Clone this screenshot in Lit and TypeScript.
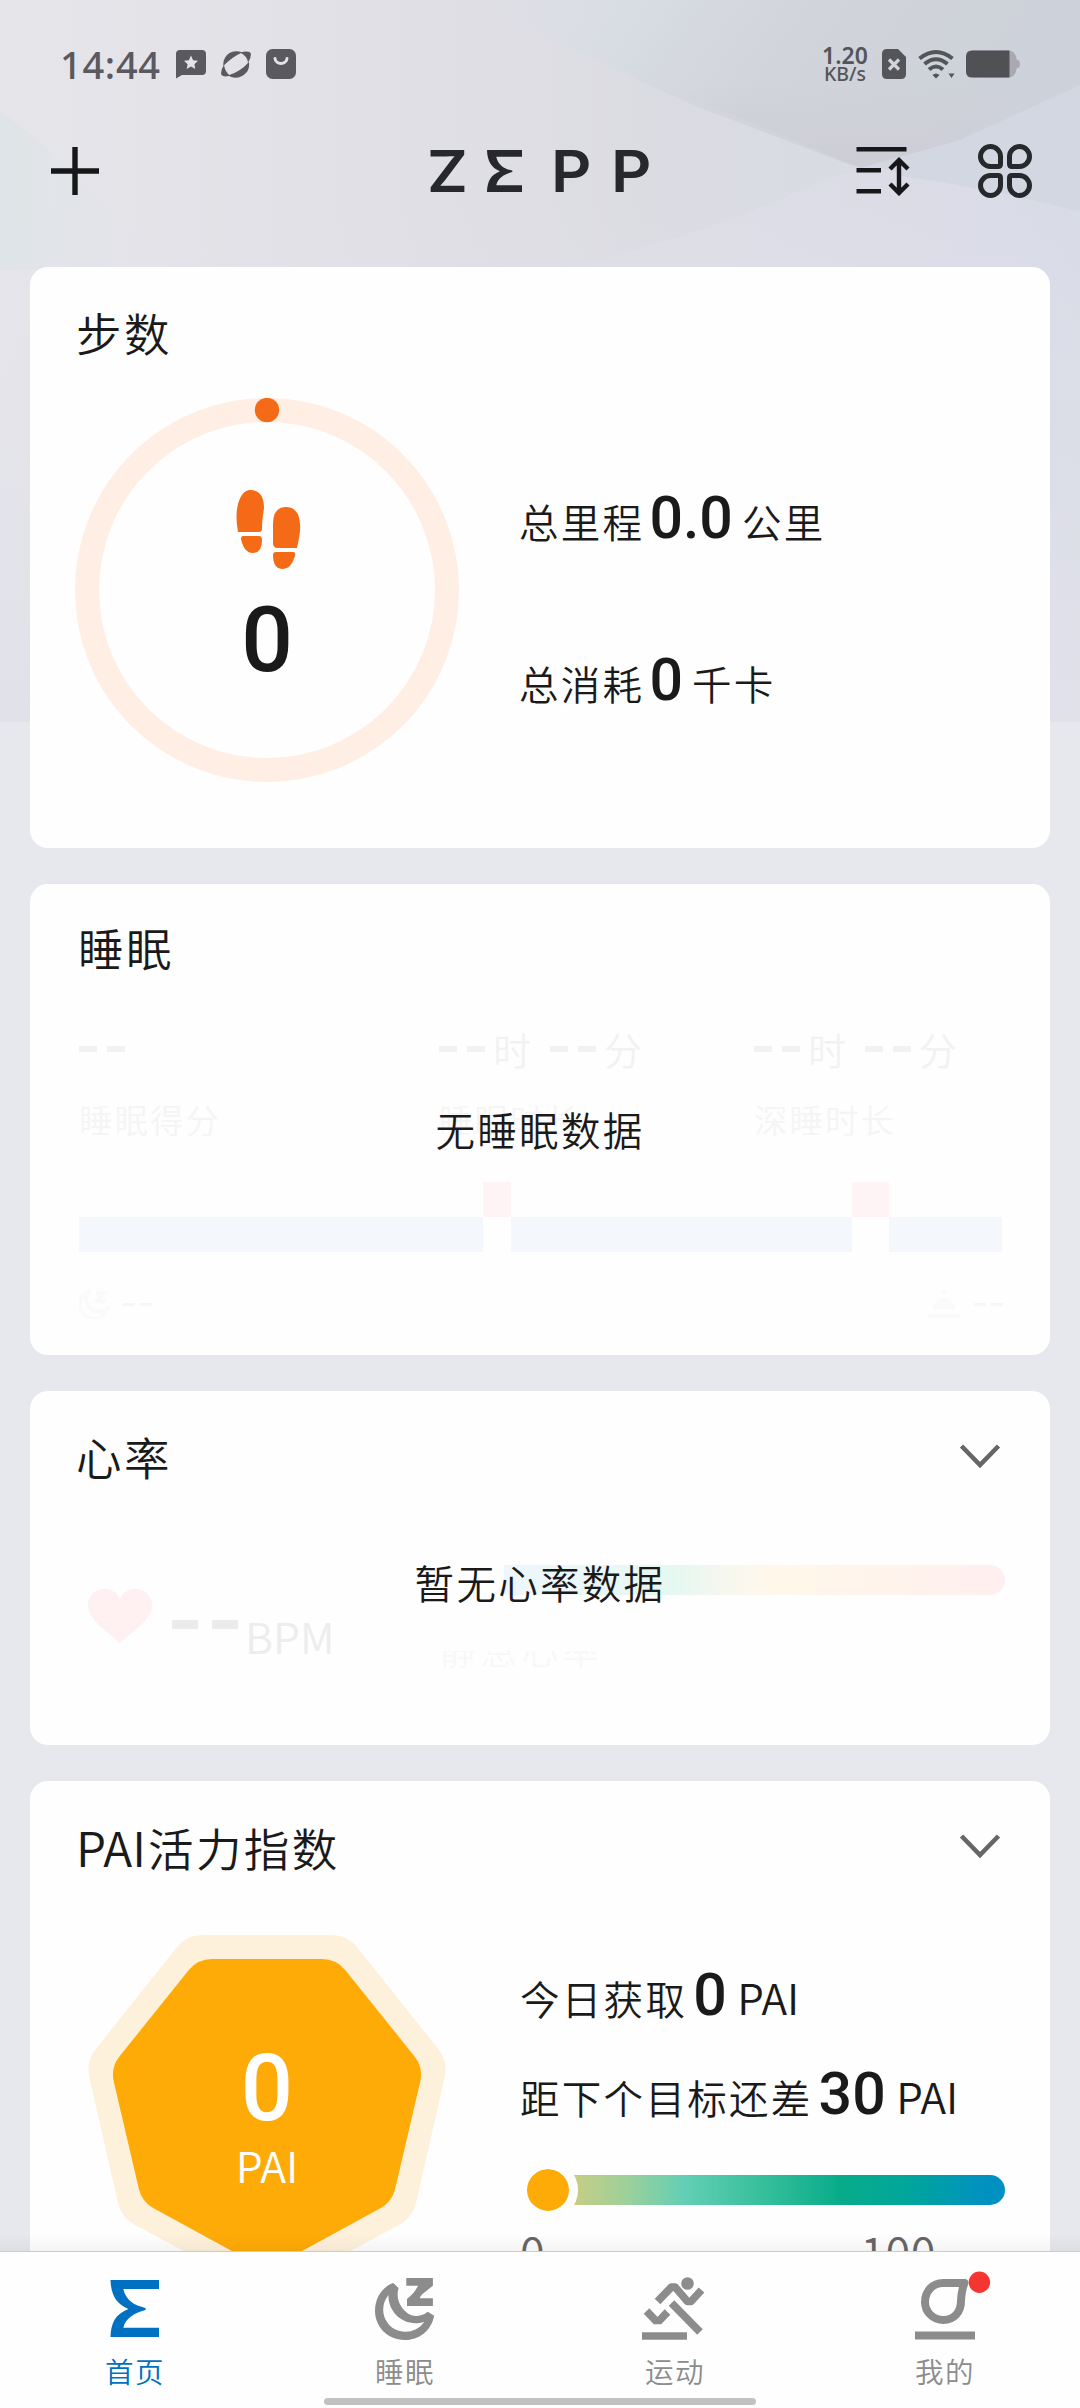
import { LitElement, html, css, svg } from "lit";
import { customElement, property } from "lit/decorators.js";

const sigma = svg`<path d="M10.5 4H59V13H23.3C26 25 35 29 43 31.3Q46 32 46 33T43 34.7C35 37 25.500 42 23.300 51.700H59V61H10.500C11 47 15 38.500 28.400 33C17 28 11 20 10.500 4Z"/>`;

const chevron = html`<svg width="44" height="26" viewBox="0 0 44 26" fill="none" stroke="#666" stroke-width="4.600"><path d="M2.500 3L21 22L39.500 3"/></svg>`;

@customElement("status-bar")
class StatusBar extends LitElement {
  static styles = css`
    :host { display: flex; height: 40px; padding: 44px 60px 0 60px; align-items: center; color: #5a595f; font-family: "Noto Sans", sans-serif; }
    .time { width: 116px; font-size: 38px; font-weight: 500; line-height: 40px; letter-spacing: .7px; }
    .icons { display: flex; gap: 15px; align-items: center; }
    .right { display: flex; margin-left: auto; align-items: center; color: #545559; }
    .speed { width: 48px; margin-right: 13px; text-align: center; font-weight: 600; white-space: nowrap; }
    .num { font-size: 23px; line-height: 20px; }
    .unit { font-size: 19.500px; line-height: 18px; font-weight: 500; }
    .sim { margin-right: 12px; }
    .wifi { margin-right: 11px; }
    svg { display: block; }
  `;
  render() {
    return html`
      <div class="time">14:44</div>
      <div class="icons">
        <svg width="30" height="30" viewBox="0 0 30 30" fill="currentColor"><path fill-rule="evenodd" d="M4 1H26Q30 1 30 5V22Q30 26 26 26H6L0 29.500V5Q0 1 4 1ZM15 6.500L12.900 11.200L8 11.800L11.600 15.200L10.700 20L15 17.600L19.300 20L18.400 15.200L22 11.800L17.100 11.200Z"/></svg>
        <svg width="30" height="30" viewBox="0 0 30 30" fill="currentColor"><path d="M2.300 15A13 13 0 0 1 21 3.500Q11 8 2.300 17ZM28 14Q29 22 22 26.500T7 26.500Q19 23 28 13Z"/><path d="M19 3.500Q29 1 30 5Q30 9 27 14Q26.500 7 19 3.500ZM3 16Q-1 22 .5 26Q3 28.500 9 26.500Q4 23 3 16Z"/></svg>
        <svg width="30" height="30" viewBox="0 0 30 30"><rect width="30" height="30" rx="6.500" fill="currentColor"/><path d="M9 9.500C9.500 16 20.500 16 21 9.500" fill="none" stroke="#e5e4ea" stroke-width="3" stroke-linecap="round"/></svg>
      </div>
      <div class="right">
        <div class="speed"><div class="num">1.20</div><div class="unit">KB/s</div></div>
        <svg class="sim" width="24" height="30" viewBox="0 0 24 30"><path d="M5 0H16L24 8V25Q24 30 19 30H5Q0 30 0 25V5Q0 0 5 0Z" fill="currentColor"/><path d="M7 10.500L17 20.500M17 10.500L7 20.500" stroke="#d4d4da" stroke-width="3.200"/></svg>
        <svg class="wifi" width="37" height="30" viewBox="0 0 37 30" fill="none" stroke="currentColor" stroke-width="4"><path d="M1.500 9.500Q18 -3.500 34.500 9.500M6.500 15Q18 5.500 29.500 15M11 20.500Q18 14.500 25 20.500"/><path d="M14.500 26Q18 23 21.500 26L18 29.500ZM30.500 24.500H36.500L33.500 29Z" fill="currentColor" stroke="none"/></svg>
        <svg width="54" height="28" viewBox="0 0 54 28"><path d="M6 0.500H42Q50 .5 50.500 9.500Q54 10 54 14T50.500 18.500Q50 27.500 42 27.500H6Z" fill="#aaa9b1"/><path d="M6 .5H43.500V27.500H6Q0 27.500 0 21.500V6.500Q0 .5 6 .5Z" fill="#505154"/></svg>
      </div>`;
  }
}

@customElement("app-header")
class AppHeader extends LitElement {
  static styles = css`
    :host { display: flex; height: 174px; padding: 0 48px 0 51px; align-items: center; justify-content: space-between; }
    .side { width: 217px; display: flex; }
    .end { justify-content: flex-end; width: 202px; gap: 68px; align-items: center; }
    .logo { display: flex; align-items: center; color: #26282b; font: 600 58px/60px Inter, sans-serif; }
    .letter { width: 60px; transform: scaleX(1.08); transform-origin: left; }
    .mark { width: 64px; display: flex; }
    svg { display: block; }
  `;
  render() {
    return html`
      <div class="side"><svg width="48" height="48" viewBox="0 0 48 48" stroke="#161718" stroke-width="5.400"><path d="M0 24H48M24 0V48"/></svg></div>
      <div class="logo">
        <span class="letter">Z</span>
        <span class="mark"><svg width="35" height="42" viewBox="10.500 4 48.500 57" preserveAspectRatio="none" fill="currentColor">${sigma}</svg></span>
        <span class="letter">P</span><span class="letter">P</span>
      </div>
      <div class="side end">
        <svg width="54" height="50" viewBox="0 0 54 50" fill="none" stroke="#161718" stroke-width="4.400"><path d="M.5 3.200H50.500M.5 24.200H25M.5 45.200H25M43 14V47M34 23L43 14L52 23M34 38L43 47L52 38"/></svg>
        <svg width="54" height="54" viewBox="0 0 54 54" fill="none" stroke="#26282c" stroke-width="5"><path d="M12.500 2.500A10 10 0 0 1 22.500 12.500V20Q22.500 22.500 20 22.500H12.500A10 10 0 0 1 12.500 2.500Z"/><path d="M41.500 2.500A10 10 0 0 0 31.500 12.500V20Q31.500 22.500 34 22.500H41.500A10 10 0 0 0 41.500 2.500Z"/><path d="M12.500 51.500A10 10 0 0 0 22.500 41.500V34Q22.500 31.500 20 31.500H12.500A10 10 0 0 0 12.500 51.500Z"/><path d="M41.500 51.500A10 10 0 0 1 31.500 41.500V34Q31.500 31.500 34 31.500H41.500A10 10 0 0 1 41.500 51.500Z"/></svg>
      </div>`;
  }
}

const shared = css`
  :host { display: block; flex: none; position: relative; box-sizing: border-box; background: #fefefe; border-radius: 18px; color: #1a1a1a; font-family: "Noto Sans CJK SC", sans-serif; font-weight: 350; overflow: hidden; }
  .head { display: flex; align-items: center; justify-content: space-between; height: 62px; padding: 34px 47px 0 46px; }
  .title { font-size: 45.500px; line-height: 60px; letter-spacing: 2.400px; white-space: nowrap; }
  .line { font-size: 39.500px; line-height: 60px; height: 60px; letter-spacing: 2.300px; white-space: nowrap; }
  .value { font: 500 59px/60px Roboto, sans-serif; letter-spacing: 0; }
  .message { position: absolute; left: 0; right: 0; text-align: center; font-size: 39.500px; line-height: 60px; letter-spacing: 2.300px; }
  svg { display: block; }
`;

@customElement("steps-card")
class StepsCard extends LitElement {
  static styles = [shared, css`
    :host { height: 581px; }
    .body { display: flex; padding: 35px 0 0 45px; gap: 60px; }
    .ring { display: grid; width: 384px; height: 384px; }
    .ring > * { grid-area: 1 / 1; }
    .count { align-self: start; margin-top: 196px; text-align: center; font: 500 91px/92px Roboto, sans-serif; }
    .stats { display: flex; flex-direction: column; gap: 102px; padding-top: 90px; }
    .value { margin: 0 9px 0 5px; }
  `];
  render() {
    return html`
      <div class="head"><div class="title">步数</div></div>
      <div class="body">
        <div class="ring">
          <svg width="384" height="384" viewBox="0 0 384 384">
            <circle cx="192" cy="192" r="180" fill="none" stroke="#feeee4" stroke-width="24"/>
            <circle cx="192" cy="12" r="12.200" fill="#f46a16"/>
            <g fill="#f46a16">
              <path d="M163 134Q160 118 163 106Q167 92 175 92Q189 92 189 110Q187 122 187 131Q187 134 184 134Z"/>
              <path d="M168 138H184Q187 138 187 142Q187 155 178 155Q169 155 166 141Q166 138 168 138Z"/>
              <path d="M222 150Q226 132 225 126Q224 109 211 109Q198 109 198 126V146Q199 150 202 150Z"/>
              <path d="M201 154H218Q221 154 220 158Q216 171 208 171Q198 171 198 157Q198 154 201 154Z"/>
            </g>
          </svg>
          <div class="count">0</div>
        </div>
        <div class="stats">
          <div class="line">总里程<span class="value">0.0</span>公里</div>
          <div class="line">总消耗<span class="value">0</span>千卡</div>
        </div>
      </div>`;
  }
}

@customElement("sleep-card")
class SleepCard extends LitElement {
  static styles = [shared, css`
    :host { height: 471px; }
    .head { height: 64px; padding-top: 32px; }
    .title { padding: 0 0 2px 2px; }
    .grid { display: grid; grid-template-columns: 360px 315px 1fr; padding: 39px 0 0 49px; color: #f2f2f2; }
    .dur { display: flex; height: 60px; align-items: center; font-size: 38px; line-height: 60px; }
    .dash { display: flex; gap: 10px; width: 54px; }
    .dash::before, .dash::after { content: ""; width: 18px; height: 6px; background: currentColor; }
    .dur .dash:not(:first-child) { margin-left: 19px; }
    .label { margin-top: 10px; height: 60px; font-size: 33.500px; line-height: 60px; letter-spacing: 2px; color: #f5f5f5; }
    .bars { display: grid; grid-template-columns: 404px 28px 341px 37px 113px; height: 70px; margin: 33px 0 0 49px; }
    .light { height: 35px; align-self: end; background: #f4f8fd; }
    .wake { height: 35px; background: #fff4f5; }
    .foot { display: flex; justify-content: space-between; padding: 37px 47px 0 49px; color: #fafafa; }
    .end { display: flex; gap: 14px; align-items: center; }
    .mini { display: flex; gap: 5px; }
    .mini::before, .mini::after { content: ""; width: 12px; height: 3px; background: #f6f6f6; }
    .message { top: 215px; }
  `];
  render() {
    const dur = html`<span class="dash"></span>时<span class="dash"></span>分`;
    return html`
      <div class="head"><div class="title">睡眠</div></div>
      <div class="grid">
        <div class="dur"><span class="dash"></span></div><div class="dur">${dur}</div><div class="dur">${dur}</div>
        <div class="label">睡眠得分</div><div class="label">睡眠时长</div><div class="label">深睡时长</div>
      </div>
      <div class="bars"><i class="light"></i><i class="wake"></i><i class="light"></i><i class="wake"></i><i class="light"></i></div>
      <div class="foot">
        <div class="end"><svg width="30" height="30" viewBox="0 0 30 30" fill="none" stroke="currentColor" stroke-width="4"><path d="M9 3A14 14 0 1 0 28 20A13 13 0 0 1 9 3ZM17 4H26L18 12H27"/></svg><span class="mini"></span></div>
        <div class="end"><svg width="32" height="30" viewBox="0 0 32 30" fill="currentColor"><path d="M5 20A11 11 0 0 1 27 20ZM0 25H32V29H0ZM14 1H18V6H14Z"/></svg><span class="mini"></span></div>
      </div>
      <div class="message">无睡眠数据</div>`;
  }
}

@customElement("heart-card")
class HeartCard extends LitElement {
  static styles = [shared, css`
    :host { height: 354px; }
    .body { display: flex; padding: 78px 45px 0 58px; }
    .rate { display: flex; align-items: flex-start; padding-top: 23px; width: 352px; color: #ececec; }
    .dash { display: flex; gap: 14px; margin: 32px 7px 0 20px; }
    .dash::before, .dash::after { content: ""; width: 26px; height: 9px; background: #ebebeb; }
    .unit { font-size: 43px; line-height: 50px; margin-top: 22px; color: #ededed; }
    .track { flex: 1; }
    .bar { height: 30px; margin-left: 64px; border-radius: 0 15px 15px 0; background: linear-gradient(90deg, #eef7fd 0%, #eaf7f8 20%, #e4f8f1 34%, #f5f7f0 43%, #fff8ea 53%, #fff4ec 75%, #ffeff0 100%); }
    .note { font-size: 36px; line-height: 44px; margin-top: 32px; letter-spacing: 5px; color: #f8f8f8; clip-path: inset(24px 0 0 0); }
    .message { top: 161px; }
  `];
  render() {
    return html`
      <div class="head"><div class="title">心率</div>${chevron}</div>
      <div class="body">
        <div class="rate">
          <svg width="64" height="55" viewBox="0 0 64 55"><path d="M32 55C20 44 0 32 0 17C0 0 24 -6 32 11C40 -6 64 0 64 17C64 32 44 44 32 55Z" fill="#fff0f1"/></svg>
          <span class="dash"></span><span class="unit">BPM</span>
        </div>
        <div class="track"><div class="bar"></div><div class="note">静息心率</div></div>
      </div>
      <div class="message">暂无心率数据</div>`;
  }
}

@customElement("pai-card")
class PaiCard extends LitElement {
  static styles = [shared, css`
    :host { height: 560px; }
    .latin { font-size: 48px; letter-spacing: 0; margin-right: 2px; }
    .body { display: flex; padding: 58px 45px 0 58px; gap: 74px; }
    .badge { display: grid; width: 358px; height: 360px; flex: none; text-align: center; color: #fff; }
    .badge > * { grid-area: 1 / 1; }
    .score { margin-top: 108px; font: 500 92px/92px Roboto, sans-serif; }
    .unit { margin-top: 204px; font-size: 43px; line-height: 50px; height: 50px; }
    .info { flex: 1; padding-top: 30px; }
    .line + .line { margin-top: 39px; }
    .value { margin: 0 1px 0 6px; }
    .pai { font-size: 42.500px; letter-spacing: 0; }
    .slider { position: relative; height: 30px; margin-top: 51px; border-radius: 15px; background: linear-gradient(90deg, #ffb21c 0%, #c3ce86 12%, #9dd09a 22%, #62cfb5 34%, #37bf9b 50%, #08ac8a 66%, #00a69b 80%, #0092bf 95%, #0090c4 100%); }
    .knob { position: absolute; left: -2px; top: -15px; width: 42px; height: 42px; border: 9px solid #fefefe; border-radius: 50%; background: #ffab07; background-clip: padding-box; }
    .scale { display: flex; padding: 16px 69px 0 0; justify-content: space-between; color: #666; font-size: 45px; line-height: 60px; letter-spacing: .5px; }
  `];
  render() {
    return html`
      <div class="head"><div class="title"><span class="latin">PAI</span>活力指数</div>${chevron}</div>
      <div class="body">
        <div class="badge">
          <svg width="358" height="360" viewBox="88 1936 358 360" stroke-linejoin="round">
            <path d="M203 1970H331L411.500 2071L383 2196L267 2258L151 2196L122.500 2071Z" fill="#fef1dc" stroke="#fef1dc" stroke-width="68"/>
            <path d="M212 1990H322L391 2076L366 2183L267 2237L168 2183L143 2076Z" fill="#ffab07" stroke="#ffab07" stroke-width="60"/>
          </svg>
          <div class="score">0</div>
          <div class="unit">PAI</div>
        </div>
        <div class="info">
          <div class="line">今日获取<span class="value">0</span><span class="pai"> PAI</span></div>
          <div class="line">距下个目标还差<span class="value">30</span><span class="pai"> PAI</span></div>
          <div class="slider"><div class="knob"></div></div>
          <div class="scale"><span>0</span><span>100</span></div>
        </div>
      </div>`;
  }
}

@customElement("tab-item")
class TabItem extends LitElement {
  @property() label = "";
  static styles = css`
    :host { display: flex; flex: 1; flex-direction: column; align-items: center; padding-top: 24px; color: #8c8c8c; }
    :host([active]) { color: #0071c2; }
    .label { margin-top: 9px; font: 350 28.500px/40px "Noto Sans CJK SC", sans-serif; letter-spacing: 1.500px; }
  `;
  render() {
    return html`<slot></slot><div class="label">${this.label}</div>`;
  }
}

@customElement("app-root")
class AppRoot extends LitElement {
  static styles = css`
    :host { display: flex; flex-direction: column; position: relative; isolation: isolate; width: 1080px; height: 2408px; overflow: hidden; background: #e7e8ed; }
    .backdrop { position: absolute; inset: 0 0 auto 0; z-index: -1; }
    .feed { flex: 1; min-height: 0; overflow: hidden; display: flex; flex-direction: column; gap: 36px; padding: 9px 30px 0; position: relative; }
    .fade { position: absolute; left: 0; right: 0; bottom: 0; height: 18px; background: linear-gradient(transparent, rgba(0, 0, 0, .045)); border-bottom: 1px solid #ccc; box-sizing: border-box; }
    .tabs { flex: none; height: 156px; display: flex; background: #fefefe; position: relative; }
    .home { position: absolute; left: 324px; bottom: 3px; width: 432px; height: 7px; border-radius: 4px; background: #c1c1c1; }
    svg { display: block; overflow: visible; }
  `;
  render() {
    return html`
      <svg class="backdrop" width="1080" height="722" viewBox="0 0 1080 722">
        <defs>
          <linearGradient id="base" x1="0" x2="1"><stop offset="0" stop-color="#e6e5ea"/><stop offset=".35" stop-color="#e1e0e6"/><stop offset=".6" stop-color="#dbdce2"/><stop offset="1" stop-color="#d6dae4"/></linearGradient>
          <linearGradient id="dark" x1="0" x2="1" y1="0" y2=".2"><stop offset="0" stop-color="#dce1e8" stop-opacity="0"/><stop offset=".3" stop-color="#d7dbe2"/><stop offset=".55" stop-color="#d1d4d9"/><stop offset="1" stop-color="#cdd1da"/></linearGradient>
          <linearGradient id="dip" x1="0" x2="0" y1="0" y2="1"><stop offset="0" stop-color="#cfcfd8" stop-opacity="0"/><stop offset="1" stop-color="#cdccd6"/></linearGradient>
          <linearGradient id="low" x1="0" x2="1"><stop offset="0" stop-color="#dfdfe6"/><stop offset=".7" stop-color="#dcdce6"/><stop offset="1" stop-color="#d8dbe6"/></linearGradient>
          <linearGradient id="down" x1="0" x2="0" y1="0" y2="1"><stop offset="0" stop-color="#e2e3ea" stop-opacity="0"/><stop offset="1" stop-color="#e1e1ea"/></linearGradient>
          <linearGradient id="left" x1="0" x2="1"><stop offset="0" stop-color="#dee4e7"/><stop offset="1" stop-color="#e3e4e9" stop-opacity="0"/></linearGradient>
        </defs>
        <rect width="1080" height="722" fill="url(#base)"/>
        <path d="M0 110Q40 140 70 170T180 270H0Z" fill="url(#left)"/>
        <path d="M480 0H1080V90L960 140L900 165H850Q760 130 700 108Q590 60 480 0Z" fill="url(#dark)"/>
        <path d="M660 85H1050L960 140L890 168H860Q770 130 660 85Z" fill="url(#dip)"/>
        <path d="M1080 85L960 140L860 168L900 190L1080 215Z" fill="#d2d7e1"/>
        <path d="M570 266Q700 236 790 195T900 176Q1000 190 1080 212V400H400Z" fill="url(#low)"/>
        <rect y="200" width="1080" height="522" fill="url(#down)"/>
      </svg>
      <status-bar></status-bar>
      <app-header></app-header>
      <main class="feed">
        <steps-card></steps-card>
        <sleep-card></sleep-card>
        <heart-card></heart-card>
        <pai-card></pai-card>
        <div class="fade"></div>
      </main>
      <nav class="tabs">
        <tab-item active label="首页"><svg width="70" height="66" viewBox="0 0 70 66" fill="currentColor">${sigma}</svg></tab-item>
        <tab-item label="睡眠"><svg width="70" height="66" viewBox="0 0 70 66" fill="currentColor"><path fill-rule="evenodd" d="M23.200 7L28.600 12C24 26 36 41 47 40Q53 39.500 57.700 35.700L64.200 39.700C61 55 49 64 34.600 64C17 64 5 50 5 35C5 22 12 11 23.200 7ZM18.400 19C12 27 11.500 38 17 46C25 59 46 59 54.200 45.700C36 52 18 38 18.400 19Z"/><path d="M36.300 5.900H55L42.500 26.200H62.900" fill="none" stroke="currentColor" stroke-width="7.700" stroke-linejoin="bevel"/><path d="M50 2H62.900V9.700L50 20ZM37 30V23L50 11V30Z"/></svg></tab-item>
        <tab-item label="运动"><svg width="70" height="66" viewBox="0 0 70 66" fill="none" stroke="currentColor" stroke-width="7.700"><path d="M2 60H47"/><path d="M17.500 25.500L31.500 11H35L47.500 25.500H51L61.500 14" stroke-linejoin="round"/><path d="M6.500 35L15.500 44.500H19.500L27.500 36"/><path d="M31.500 27L60 56"/><circle cx="47.500" cy="7.500" r="6.300" fill="currentColor" stroke="none"/></svg></tab-item>
        <tab-item label="我的"><svg width="70" height="66" viewBox="0 0 70 66" fill="none" stroke="currentColor" stroke-width="8"><path d="M5 59.500H65"/><path d="M33 7H54.500Q51.500 14 51 25C51 36 44 44 33.500 44C23 44 15 36 15 26C15 15 23 7 33 7Z" stroke-linejoin="round"/><circle cx="69.400" cy="6.300" r="10.700" fill="#f43530" stroke="none"/></svg></tab-item>
        <div class="home"></div>
      </nav>`;
  }
}
